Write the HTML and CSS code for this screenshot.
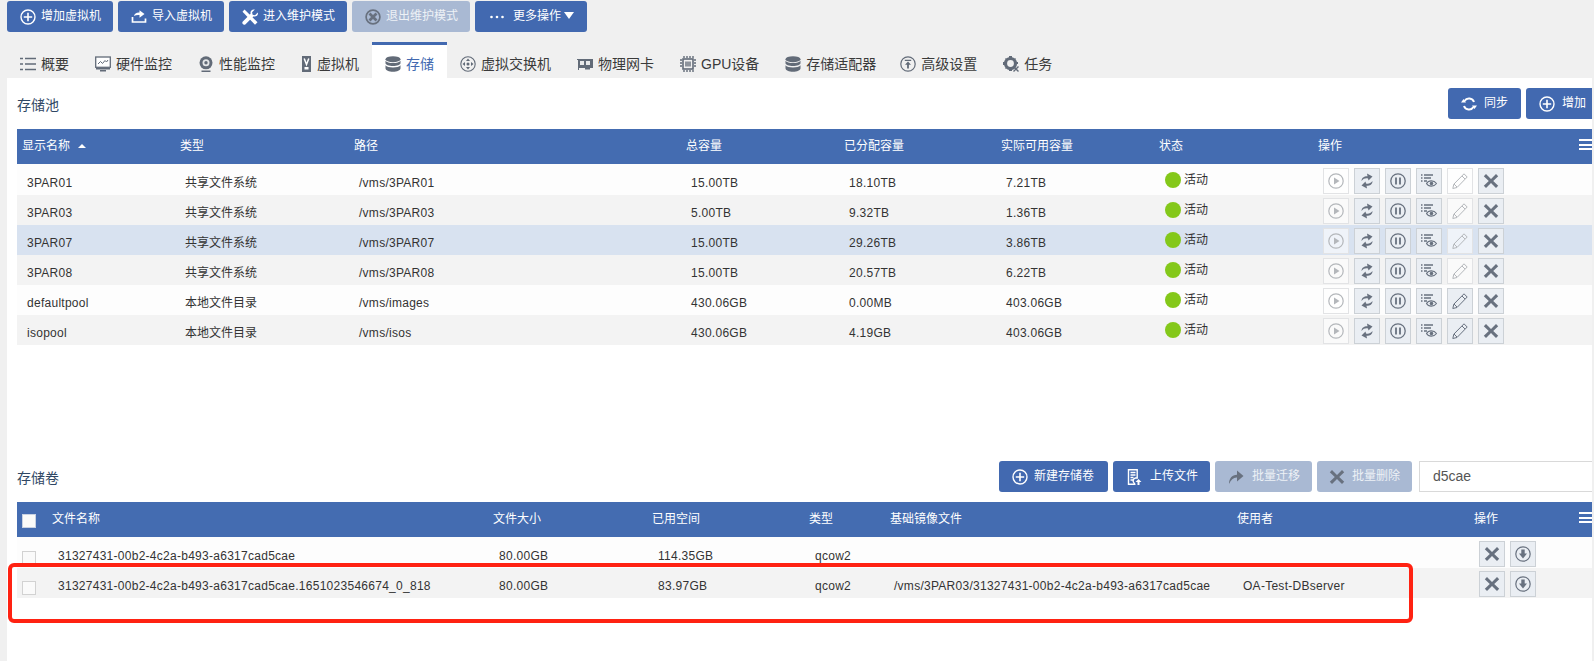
FILE: index.html
```html
<!DOCTYPE html>
<html lang="zh-CN">
<head>
<meta charset="utf-8">
<title>存储</title>
<link rel="stylesheet" href="styles.css">
</head>
<body>
<svg class="sprite" xmlns="http://www.w3.org/2000/svg">
  <symbol id="i-plus" viewBox="0 0 16 16"><circle cx="8" cy="8" r="7" fill="none" stroke="currentColor" stroke-width="1.4"/><path d="M8 3.800v8.400M3.800 8h8.400" stroke="currentColor" stroke-width="1.600"/></symbol>
  <symbol id="i-import" viewBox="0 0 16 16"><path d="M1.500 8v5h13V9.500" fill="none" stroke="currentColor" stroke-width="1.700"/><path d="M3 7C3.500 4.500 5.500 3.300 8.500 3.500V1.200L13.500 5 8.500 8.800V6C6.500 5.700 4.500 6 3 7Z" fill="currentColor"/></symbol>
  <symbol id="i-tools" viewBox="0 0 16 16"><path d="M2.500.5 15.500 13.200 13 15.700.5 2.700Z" fill="currentColor"/><path d="M15.800 3.500 13 6.200l-2.400-.5-.5-2.400L12.900.6C10.400-.3 7.800 1.900 8.600 4.700L.6 12.700c-1 2 .8 3.600 2.700 2.700l8-8c2.900.8 5.300-1.400 4.500-3.900Z" fill="currentColor"/></symbol>
  <symbol id="i-ban" viewBox="0 0 16 16"><circle cx="8" cy="8" r="6.900" fill="none" stroke="currentColor" stroke-width="1.700"/><path d="M4.500 4.500 11.500 11.500M11.500 4.500 4.500 11.500" stroke="currentColor" stroke-width="2.800"/></symbol>
  <symbol id="i-dots" viewBox="0 0 16 16"><circle cx="2.500" cy="8" r="1.300" fill="currentColor"/><circle cx="8" cy="8" r="1.300" fill="currentColor"/><circle cx="13.500" cy="8" r="1.300" fill="currentColor"/></symbol>
  <symbol id="i-list" viewBox="0 0 16 16"><path d="M5 2.500h11M5 8h11M5 13.500h11M0 2.500h3M0 8h3M0 13.500h3" stroke="currentColor" stroke-width="1.300"/></symbol>
  <symbol id="i-monitor" viewBox="0 0 16 16"><rect x=".7" y="1" width="14.600" height="10.300" fill="#fff" stroke="currentColor" stroke-width="1.300"/><path d="M3 8 5.500 5.500 7.500 7.500 10 4.500 11.500 6 13 4" fill="none" stroke="currentColor"/><path d="M1 12h14v1.500H1ZM5 14h6v1.500H5Z" fill="currentColor"/></symbol>
  <symbol id="i-cam" viewBox="0 0 16 16"><circle cx="8" cy="6.800" r="6.500" fill="currentColor"/><circle cx="8" cy="6.800" r="3.500" fill="#e4e6e8"/><circle cx="8" cy="6.800" r="1.700" fill="currentColor"/><path d="M3.500 14.500h9V16h-9Z" fill="currentColor"/></symbol>
  <symbol id="i-vm" viewBox="0 0 11 16"><rect x="1" y="0" width="9" height="16" fill="currentColor"/><path d="M3.200 2.500 5.500 8.500 7.800 2.500" fill="none" stroke="#fff" stroke-width="1.500"/><rect x="3.500" y="11" width="4" height="2.500" fill="#fff"/></symbol>
  <symbol id="i-db" viewBox="0 0 16 16"><ellipse cx="8" cy="3.200" rx="7.500" ry="3" fill="currentColor"/><path d="M.5 4.800v2.400C.5 8.700 4 10 8 10s7.500-1.300 7.500-2.800V4.800C14.500 6.200 11.500 7.100 8 7.100S1.500 6.200.5 4.800ZM.5 9.300v3C.5 14.300 4 15.800 8 15.800s7.500-1.500 7.500-3.500v-3C14.500 10.700 11.500 11.500 8 11.500S1.500 10.700.5 9.300Z" fill="currentColor"/></symbol>
  <symbol id="i-switch" viewBox="0 0 16 16"><circle cx="8" cy="8" r="7.200" fill="none" stroke="currentColor" stroke-width="1.100"/><path d="M8 2.500 10 5H6ZM8 13.500 10 11H6ZM2.500 8 5 6v4ZM13.500 8 11 6v4Z" fill="currentColor"/><circle cx="8" cy="8" r="1.500" fill="currentColor"/></symbol>
  <symbol id="i-nic" viewBox="0 0 16 16"><path d="M0 3h16v9h-3v1.500H8V12H2v2H1V4H0Z" fill="currentColor"/><path d="M3 5h4v4H3ZM9 5h4v4H9Z" fill="#e9eaeb"/></symbol>
  <symbol id="i-gpu" viewBox="0 0 16 16"><rect x="3" y="3" width="10" height="10" fill="none" stroke="currentColor" stroke-width="1.600"/><rect x="5" y="5.500" width="6" height="5" fill="currentColor" opacity=".7"/><path d="M4 0v2M7 0v2M10 0v2M13 0v2M4 14v2M7 14v2M10 14v2M13 14v2M0 4h2M0 7h2M0 10h2M14 4h2M14 7h2M14 10h2" stroke="currentColor" stroke-width="1.400"/></symbol>
  <symbol id="i-adv" viewBox="0 0 16 16"><circle cx="8" cy="8" r="7.200" fill="none" stroke="currentColor" stroke-width="1.200"/><path d="M4.800 3.800h6.400v1.300H4.800ZM8 5.500l3 3.300H8.900V12.500H7.100V8.800H5Z" fill="currentColor"/></symbol>
  <symbol id="i-gear" viewBox="0 0 16 16"><circle cx="7.500" cy="7.500" r="5" fill="none" stroke="currentColor" stroke-width="3.200"/><path d="M6 0h3v2.500H6ZM0 6h2.500v3H0ZM12.500 6H15v2h-2.500ZM6 12.500h3V15H6ZM2 2l2 1-1 1ZM13 2l-2 1 1 1ZM2 13l2-1-1-1Z" fill="currentColor"/><path d="M10.500 10.500 15.500 15.500M15.500 10.500 10.500 15.500" stroke="currentColor" stroke-width="1.400"/></symbol>
  <symbol id="i-sync" viewBox="0 0 16 16"><path d="M13 6A5.300 5.300 0 0 0 3.500 5" fill="none" stroke="currentColor" stroke-width="2"/><path d="M3 10a5.300 5.300 0 0 0 9.500 1" fill="none" stroke="currentColor" stroke-width="2"/><path d="M0 6.500h5L2.500 3ZM11 9.500h5L13.500 13Z" fill="currentColor"/></symbol>
  <symbol id="i-doc" viewBox="0 0 16 16"><path d="M2.500.8h8.700v8.200h-1.700a3 3 0 0 0-1 5.500l.2.700H2.500Z" fill="none" stroke="currentColor" stroke-width="1.400"/><path d="M4.500 3.500h5M4.500 6h5M4.500 8.500h3M4.500 11h3" stroke="currentColor" stroke-width="1.300"/><path d="M12.500 10 15.500 13H13.500V16H11.500V13H9.500Z" fill="currentColor"/></symbol>
  <symbol id="i-share" viewBox="0 0 16 16"><path d="M1 15C1 9.500 4 6 9 5.800V1.500L15.500 7 9 12.500V8.500C5.500 8.300 3 10.500 1 15Z" fill="currentColor"/></symbol>
  <symbol id="i-x" viewBox="0 0 16 16"><path d="M3 1 8 6l5-5 2.200 2.200-5 4.800 5 4.800L13 15l-5-5-5 5-2.200-2.200 5-4.800-5-4.800Z" fill="currentColor"/></symbol>
  <symbol id="i-play" viewBox="0 0 16 16"><circle cx="8" cy="8" r="7.200" fill="none" stroke="currentColor" stroke-width="1.200"/><path d="M6 4.500 11.500 8 6 11.500Z" fill="currentColor"/></symbol>
  <symbol id="i-pause" viewBox="0 0 16 16"><circle cx="8" cy="8" r="7.200" fill="none" stroke="currentColor" stroke-width="1.300"/><path d="M6 4.500v7M10 4.500v7" stroke="currentColor" stroke-width="1.800"/></symbol>
  <symbol id="i-loop" viewBox="0 0 16 16"><path d="M2.500 8C2.500 4.500 5.500 3 8.500 3.200L8 .5 13.500 3.500 9.500 7.500 9 5.500C6.500 5 4.500 5.500 2.500 8Z" fill="currentColor"/><path d="M13.500 8C13.500 11.500 10.500 13 7.500 12.800L8 15.500 2.500 12.500 6.500 8.500 7 10.500C9.500 11 11.500 10.500 13.500 8Z" fill="currentColor"/></symbol>
  <symbol id="i-eyes" viewBox="0 0 16 16"><path d="M0 2h1.500M3 2h9M0 5h1.500M3 5h7M0 8h1.500M3 8h3" stroke="currentColor" stroke-width="1.300"/><path d="M5.500 10.500C7.500 7 13 7 15.500 10.500 13 14 7.500 14 5.500 10.500Z" fill="none" stroke="currentColor" stroke-width="1.100"/><circle cx="10.500" cy="10.500" r="1.800" fill="currentColor"/></symbol>
  <symbol id="i-pen" viewBox="0 0 16 16"><path d="M12 .8 15.200 4 5 14.500l-4.200 1 1-4.300ZM10 3l3 3M2 11l3 3" fill="none" stroke="currentColor" stroke-width="1"/></symbol>
  <symbol id="i-down" viewBox="0 0 16 16"><circle cx="8" cy="8" r="7.200" fill="none" stroke="currentColor" stroke-width="1.200"/><path d="M6.300 3.500h3.400v4h2.300L8 12.500 4 7.500h2.300Z" fill="currentColor"/></symbol>
</svg>

<header class="actions">
  <button class="btn"><svg class="ico"><use href="#i-plus"/></svg>增加虚拟机</button>
  <button class="btn"><svg class="ico"><use href="#i-import"/></svg>导入虚拟机</button>
  <button class="btn"><svg class="ico"><use href="#i-tools"/></svg>进入维护模式</button>
  <button class="btn is-off"><svg class="ico ico-dark"><use href="#i-ban"/></svg>退出维护模式</button>
  <button class="btn btn-more"><svg class="ico ico-dots"><use href="#i-dots"/></svg>更多操作<span class="caret"></span></button>
</header>

<nav class="tabs">
  <a class="tab"><svg class="ico"><use href="#i-list"/></svg>概要</a>
  <a class="tab"><svg class="ico"><use href="#i-monitor"/></svg>硬件监控</a>
  <a class="tab"><svg class="ico"><use href="#i-cam"/></svg>性能监控</a>
  <a class="tab"><svg class="ico ico-narrow"><use href="#i-vm"/></svg>虚拟机</a>
  <a class="tab is-active"><svg class="ico"><use href="#i-db"/></svg>存储</a>
  <a class="tab"><svg class="ico"><use href="#i-switch"/></svg>虚拟交换机</a>
  <a class="tab"><svg class="ico"><use href="#i-nic"/></svg>物理网卡</a>
  <a class="tab"><svg class="ico"><use href="#i-gpu"/></svg>GPU设备</a>
  <a class="tab tab-tight"><svg class="ico"><use href="#i-db"/></svg>存储适配器</a>
  <a class="tab"><svg class="ico"><use href="#i-adv"/></svg>高级设置</a>
  <a class="tab"><svg class="ico"><use href="#i-gear"/></svg>任务</a>
</nav>

<main class="panel">
  <section class="pool">
    <div class="toolbar">
      <h2 class="title">存储池</h2>
      <div class="tools">
        <button class="btn btn-pair"><svg class="ico"><use href="#i-sync"/></svg>同步</button>
        <button class="btn btn-pair"><svg class="ico"><use href="#i-plus"/></svg>增加</button>
      </div>
    </div>
    <div class="table-wrap">
      <span class="menu"></span>
      <table class="grid grid-pool">
        <colgroup><col class="p1"><col class="p2"><col class="p3"><col class="p4"><col class="p5"><col class="p6"><col class="p7"><col class="p8"></colgroup>
        <thead><tr><th>显示名称<span class="sort"></span></th><th>类型</th><th>路径</th><th>总容量</th><th>已分配容量</th><th>实际可用容量</th><th>状态</th><th>操作</th></tr></thead>
        <tbody>
          <tr><td>3PAR01</td><td>共享文件系统</td><td>/vms/3PAR01</td><td>15.00TB</td><td>18.10TB</td><td>7.21TB</td><td><span class="status"><i class="dot"></i>活动</span></td><td class="cell-ops"><div class="ops"><span class="op op-off"><svg><use href="#i-play"/></svg></span><span class="op"><svg><use href="#i-loop"/></svg></span><span class="op"><svg><use href="#i-pause"/></svg></span><span class="op"><svg><use href="#i-eyes"/></svg></span><span class="op op-off"><svg><use href="#i-pen"/></svg></span><span class="op"><svg><use href="#i-x"/></svg></span></div></td></tr>
          <tr><td>3PAR03</td><td>共享文件系统</td><td>/vms/3PAR03</td><td>5.00TB</td><td>9.32TB</td><td>1.36TB</td><td><span class="status"><i class="dot"></i>活动</span></td><td class="cell-ops"><div class="ops"><span class="op op-off"><svg><use href="#i-play"/></svg></span><span class="op"><svg><use href="#i-loop"/></svg></span><span class="op"><svg><use href="#i-pause"/></svg></span><span class="op"><svg><use href="#i-eyes"/></svg></span><span class="op op-off"><svg><use href="#i-pen"/></svg></span><span class="op"><svg><use href="#i-x"/></svg></span></div></td></tr>
          <tr class="is-selected"><td>3PAR07</td><td>共享文件系统</td><td>/vms/3PAR07</td><td>15.00TB</td><td>29.26TB</td><td>3.86TB</td><td><span class="status"><i class="dot"></i>活动</span></td><td class="cell-ops"><div class="ops"><span class="op op-off"><svg><use href="#i-play"/></svg></span><span class="op"><svg><use href="#i-loop"/></svg></span><span class="op"><svg><use href="#i-pause"/></svg></span><span class="op"><svg><use href="#i-eyes"/></svg></span><span class="op op-off"><svg><use href="#i-pen"/></svg></span><span class="op"><svg><use href="#i-x"/></svg></span></div></td></tr>
          <tr><td>3PAR08</td><td>共享文件系统</td><td>/vms/3PAR08</td><td>15.00TB</td><td>20.57TB</td><td>6.22TB</td><td><span class="status"><i class="dot"></i>活动</span></td><td class="cell-ops"><div class="ops"><span class="op op-off"><svg><use href="#i-play"/></svg></span><span class="op"><svg><use href="#i-loop"/></svg></span><span class="op"><svg><use href="#i-pause"/></svg></span><span class="op"><svg><use href="#i-eyes"/></svg></span><span class="op op-off"><svg><use href="#i-pen"/></svg></span><span class="op"><svg><use href="#i-x"/></svg></span></div></td></tr>
          <tr><td>defaultpool</td><td>本地文件目录</td><td>/vms/images</td><td>430.06GB</td><td>0.00MB</td><td>403.06GB</td><td><span class="status"><i class="dot"></i>活动</span></td><td class="cell-ops"><div class="ops"><span class="op op-off"><svg><use href="#i-play"/></svg></span><span class="op"><svg><use href="#i-loop"/></svg></span><span class="op"><svg><use href="#i-pause"/></svg></span><span class="op"><svg><use href="#i-eyes"/></svg></span><span class="op"><svg><use href="#i-pen"/></svg></span><span class="op"><svg><use href="#i-x"/></svg></span></div></td></tr>
          <tr><td>isopool</td><td>本地文件目录</td><td>/vms/isos</td><td>430.06GB</td><td>4.19GB</td><td>403.06GB</td><td><span class="status"><i class="dot"></i>活动</span></td><td class="cell-ops"><div class="ops"><span class="op op-off"><svg><use href="#i-play"/></svg></span><span class="op"><svg><use href="#i-loop"/></svg></span><span class="op"><svg><use href="#i-pause"/></svg></span><span class="op"><svg><use href="#i-eyes"/></svg></span><span class="op"><svg><use href="#i-pen"/></svg></span><span class="op"><svg><use href="#i-x"/></svg></span></div></td></tr>
        </tbody>
      </table>
    </div>
  </section>

  <section class="volumes">
    <div class="toolbar">
      <h2 class="title">存储卷</h2>
      <div class="tools">
        <button class="btn btn-new"><svg class="ico"><use href="#i-plus"/></svg>新建存储卷</button>
        <button class="btn btn-wide"><svg class="ico"><use href="#i-doc"/></svg>上传文件</button>
        <button class="btn btn-wide is-off"><svg class="ico ico-dark"><use href="#i-share"/></svg>批量迁移</button>
        <button class="btn btn-del is-off"><svg class="ico ico-dark"><use href="#i-x"/></svg>批量删除</button>
        <input class="search" type="text" value="d5cae">
      </div>
    </div>
    <div class="table-wrap">
      <span class="menu"></span>
      <table class="grid grid-vol">
        <colgroup><col class="v0"><col class="v1"><col class="v2"><col class="v3"><col class="v4"><col class="v5"><col class="v6"><col class="v7"></colgroup>
        <thead><tr><th><span class="check check-head"></span></th><th>文件名称</th><th>文件大小</th><th>已用空间</th><th>类型</th><th>基础镜像文件</th><th>使用者</th><th>操作</th></tr></thead>
        <tbody>
          <tr><td class="cell-check"><span class="check"></span></td><td>31327431-00b2-4c2a-b493-a6317cad5cae</td><td>80.00GB</td><td>114.35GB</td><td>qcow2</td><td></td><td></td><td class="cell-ops"><div class="ops"><span class="op"><svg><use href="#i-x"/></svg></span><span class="op"><svg><use href="#i-down"/></svg></span></div></td></tr>
          <tr><td class="cell-check"><span class="check"></span></td><td>31327431-00b2-4c2a-b493-a6317cad5cae.1651023546674_0_818</td><td>80.00GB</td><td>83.97GB</td><td>qcow2</td><td>/vms/3PAR03/31327431-00b2-4c2a-b493-a6317cad5cae</td><td>OA-Test-DBserver</td><td class="cell-ops"><div class="ops"><span class="op"><svg><use href="#i-x"/></svg></span><span class="op"><svg><use href="#i-down"/></svg></span></div></td></tr>
        </tbody>
      </table>
    </div>
  </section>
</main>

<div class="annotation"></div>
</body>
</html>
```

FILE: styles.css
```css
* { box-sizing: border-box; }
html, body { height: 100%; }
body {
  margin: 0;
  display: flex;
  flex-direction: column;
  overflow: hidden;
  position: relative;
  background: #f0f0f0;
  color: #333;
  font: 12px/1.2 "Liberation Sans", "Noto Sans CJK SC", sans-serif;
}
.sprite { display: none; }

.actions { display: flex; gap: 5px; padding: 1px 0 0 7px; }

.btn {
  display: inline-flex;
  align-items: center;
  flex: none;
  gap: 5px;
  height: 31px;
  padding: 0 12px 0 13px;
  border: 0;
  border-radius: 3px;
  background: #4269b0;
  color: #fff;
  font: inherit;
}
.btn.is-off { background: #a9b9d3; color: #edf1f6; }
.btn-more { padding-right: 13px; }
.btn-pair { gap: 7px; padding: 0 13px; }
.btn-new { gap: 6px; padding: 0 14px 0 13px; }
.btn-wide { gap: 8px; padding: 0 12px 0 13px; }
.btn-del { gap: 7px; padding: 0 12px; }
.ico { width: 16px; height: 16px; flex: none; }
.ico-dark { color: #68717f; }
.ico-dots { width: 18px; margin-right: 2px; }
.ico-narrow { width: 11px; }
.caret {
  width: 0;
  height: 0;
  margin: 0 0 2px -2px;
  border: 5.5px solid transparent;
  border-top: 7px solid #fff;
  border-bottom: 0;
}

.tabs { display: flex; margin-top: 10px; padding-left: 7px; height: 36px; }
.tab {
  display: flex;
  align-items: center;
  gap: 5px;
  padding: 5px 13px 0;
  border-top: 3px solid transparent;
  color: #3a3a3a;
  font-size: 14px;
}
.tab .ico { color: #626b78; }
.tab.is-active { border-top-color: #4269b0; background: #fff; color: #4269b0; }
.tab-tight { padding-right: 11px; }

.panel {
  flex: 1;
  min-height: 0;
  margin: 0 2px 0 7px;
  padding: 10px 0 0 10px;
  overflow: hidden;
  background: #fff;
}
.toolbar { display: flex; justify-content: space-between; align-items: center; height: 31px; }
.title { margin: 0; padding-top: 4px; color: #2f4764; font-size: 14px; font-weight: 400; }
.tools { display: flex; gap: 5px; margin-right: -7px; }
.volumes { margin-top: 116px; }
.search {
  width: 180px;
  height: 31px;
  margin-left: 2px;
  padding: 0 0 2px 13px;
  border: 1px solid #d9d9d9;
  color: #555;
  font: 14px "Liberation Sans", sans-serif;
}

.table-wrap { position: relative; margin-top: 10px; }
.menu {
  position: absolute;
  top: 10px;
  right: 0;
  width: 13px;
  height: 11px;
  border-top: 2px solid #fff;
  border-bottom: 2px solid #fff;
  background: linear-gradient(#fff, #fff) center / 100% 2px no-repeat;
}

.grid { width: 1575px; table-layout: fixed; border-collapse: separate; border-spacing: 0; }
.p1 { width: 158px; } .p2 { width: 174px; } .p3 { width: 332px; } .p4 { width: 158px; }
.p5 { width: 157px; } .p6 { width: 158px; } .p7 { width: 159px; } .p8 { width: 279px; }
.v0 { width: 30px; } .v1 { width: 441px; } .v2 { width: 159px; } .v3 { width: 157px; }
.v4 { width: 81px; } .v5 { width: 347px; } .v6 { width: 237px; } .v7 { width: 123px; }

.grid th {
  height: 35px;
  padding: 0 0 0 5px;
  background: #446cb1;
  color: #fff;
  font-weight: 400;
  text-align: left;
}
.grid td {
  height: 30px;
  padding: 6px 0 0 10px;
  line-height: 24px;
  letter-spacing: .27px;
  white-space: nowrap;
  vertical-align: top;
}
.grid-pool td:nth-child(2) { letter-spacing: 0; }
.grid-vol td { padding-left: 11px; }
.grid-vol td:nth-child(6) { padding-left: 9px; }
.grid tbody tr:first-child td { border-top: 1px solid #fdfdfd; }
.grid tbody tr:nth-child(odd) td { background: #fdfdfd; }
.grid tbody tr:nth-child(even) td { background: #f3f3f3; }
.grid tbody tr.is-selected td { background: #d8e2f0; }
.grid td.cell-ops { padding: 3px 0 0 10px; }
.grid td.cell-check { padding: 13px 0 0 5px; line-height: 0; }

.sort {
  display: inline-block;
  margin: 0 0 2px 8px;
  border: 4px solid transparent;
  border-bottom: 4px solid #fff;
  border-top: 0;
  vertical-align: middle;
}
.check {
  display: inline-block;
  width: 14px;
  height: 14px;
  border: 1px solid #d2d2d2;
  background: #fafafa;
}
.check-head { margin-top: 2px; border-color: #c9d2e2; background: #fbfbf9; vertical-align: middle; }

.status { display: flex; align-items: center; gap: 3px; margin-top: -3px; line-height: 24px; letter-spacing: 0; }
.dot { width: 16px; height: 16px; margin-left: 1px; border-radius: 50%; background: #84c81a; }

.ops { display: flex; gap: 5px; }
.op {
  display: flex;
  align-items: center;
  justify-content: center;
  width: 26px;
  height: 26px;
  border: 1px solid #ccd1d6;
  background: #eaeef3;
  color: #68717f;
}
.op svg { width: 16px; height: 16px; }
.op-off { border-color: #e2e3e5; background: rgba(255, 255, 255, .6); color: #b4b7bb; }

.annotation {
  position: absolute;
  left: 8px;
  top: 563px;
  width: 1405px;
  height: 60px;
  border: 4.5px solid #ff2212;
  border-radius: 6px;
}
```
